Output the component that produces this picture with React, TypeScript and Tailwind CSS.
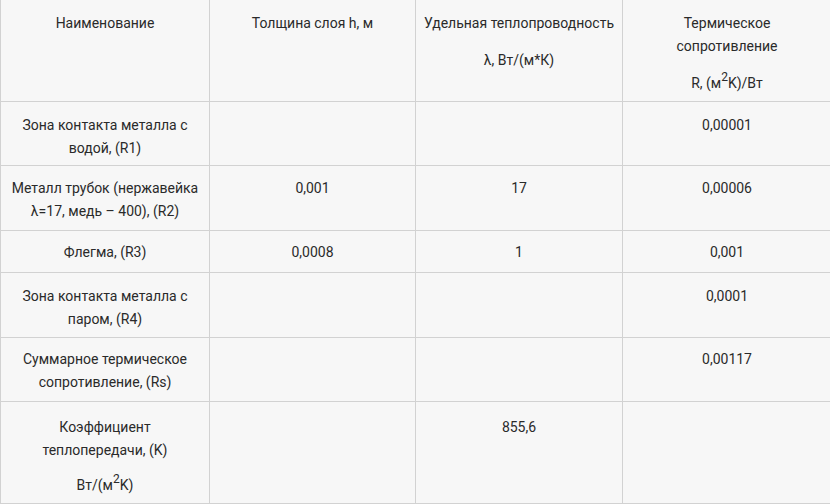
import React from 'react';

type Cell = React.ReactNode;

const Sup = ({ children }: { children: React.ReactNode }) => (
  <sup className="text-[12px] top-[-0.55em]">{children}</sup>
);

const rows: { h: string; pt: string; cells: Cell[] }[] = [
  {
    h: 'h-[102px]',
    pt: 'pt-[12px]',
    cells: [
      'Наименование',
      'Толщина слоя h, м',
      <>
        <div>Удельная теплопроводность</div>
        <div className="mt-[14px]">λ, Вт/(м*К)</div>
      </>,
      <>
        <div>
          Термическое
          <br />
          сопротивление
        </div>
        <div className="mt-[14px]">
          R, (м<Sup>2</Sup>K)/Вт
        </div>
      </>,
    ],
  },
  {
    h: 'h-[64px]',
    pt: 'pt-[12px]',
    cells: [
      <>
        Зона контакта металла с
        <br />
        водой, (R1)
      </>,
      '',
      '',
      '0,00001',
    ],
  },
  {
    h: 'h-[65px]',
    pt: 'pt-[11px]',
    cells: [
      <>
        Металл трубок (нержавейка
        <br />
        λ=17, медь – 400), (R2)
      </>,
      '0,001',
      '17',
      '0,00006',
    ],
  },
  {
    h: 'h-[42px]',
    pt: 'pt-[10px]',
    cells: ['Флегма, (R3)', '0,0008', '1', '0,001'],
  },
  {
    h: 'h-[65px]',
    pt: 'pt-[12px]',
    cells: [
      <>
        Зона контакта металла с
        <br />
        паром, (R4)
      </>,
      '',
      '',
      '0,0001',
    ],
  },
  {
    h: 'h-[64px]',
    pt: 'pt-[10px]',
    cells: [
      <>
        Суммарное термическое
        <br />
        сопротивление, (Rs)
      </>,
      '',
      '',
      '0,00117',
    ],
  },
  {
    h: 'h-[102px]',
    pt: 'pt-[14px]',
    cells: [
      <>
        <div>
          Коэффициент
          <br />
          теплопередачи, (K)
        </div>
        <div className="mt-[12px]">
          Вт/(м<Sup>2</Sup>K)
        </div>
      </>,
      '',
      '855,6',
      '',
    ],
  },
];

export default function App() {
  return (
    <div className="w-[830px] h-[504px] overflow-hidden bg-[#f7f7f7]">
      <div
        className="-mt-px grid w-[831px] grid-cols-[209px_206px_207px_209px] border-l border-t border-[#d2d2d2] text-[14px] leading-[23px] text-[#2a2a2a]"
        style={{ fontFamily: 'Roboto, "Noto Sans", sans-serif' }}
      >
        {rows.map((row, r) =>
          row.cells.map((cell, c) => (
            <div
              key={`${r}-${c}`}
              className={`${row.h} ${row.pt} whitespace-nowrap border-r border-b border-[#d2d2d2] px-[6px] text-center`}
            >
              {cell}
            </div>
          ))
        )}
      </div>
    </div>
  );
}
